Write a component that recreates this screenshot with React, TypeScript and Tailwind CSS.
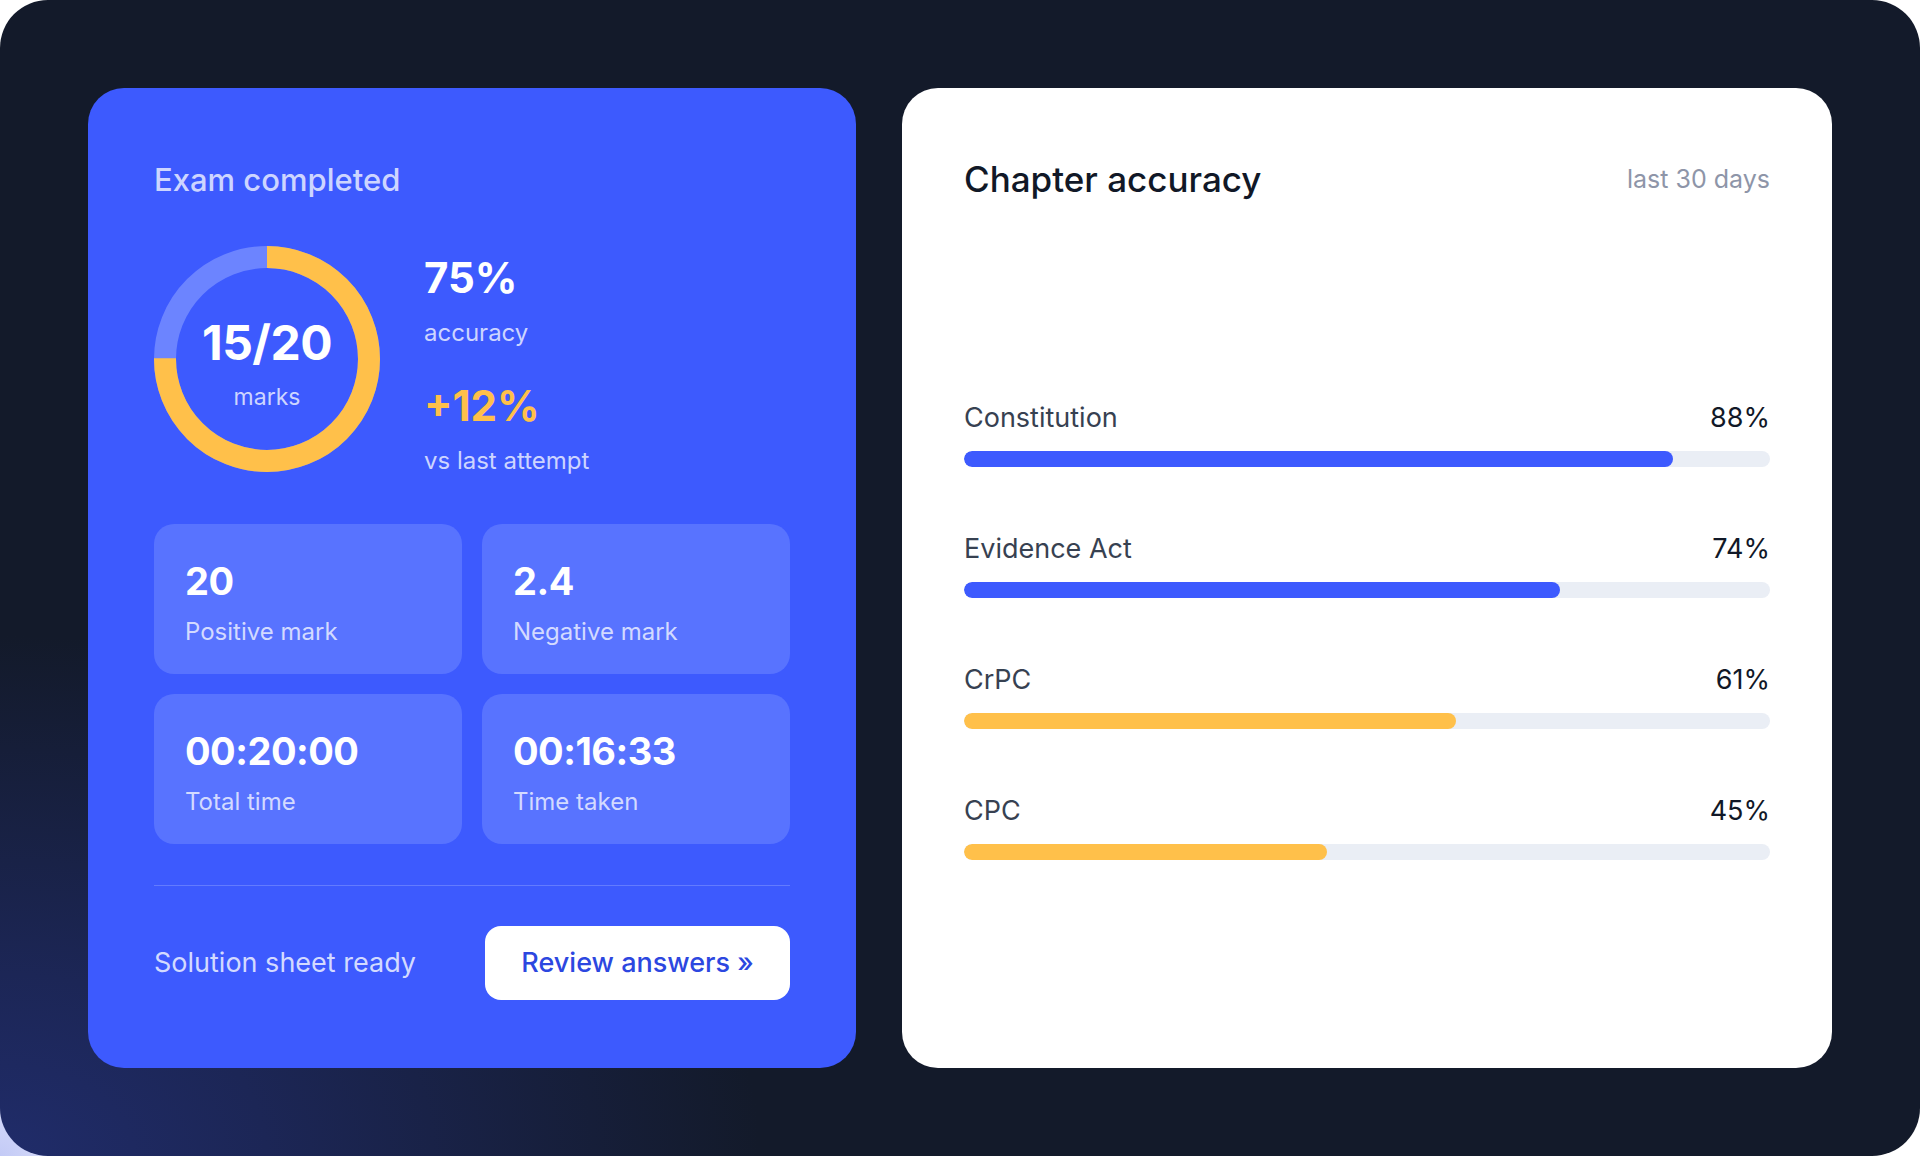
import React from "react";

function Donut() {
  const size = 226;
  const stroke = 22;
  const r = (size - stroke) / 2;
  const c = 2 * Math.PI * r;
  return (
    <div className="relative h-[226px] w-[226px] shrink-0">
      <svg width={size} height={size} viewBox={`0 0 ${size} ${size}`} className="block">
        <circle cx={size / 2} cy={size / 2} r={r} fill="none" stroke="#6c84ff" strokeWidth={stroke} />
        <circle
          cx={size / 2}
          cy={size / 2}
          r={r}
          fill="none"
          stroke="#ffc04a"
          strokeWidth={stroke}
          strokeDasharray={`${c * 0.75} ${c}`}
          transform={`rotate(-90 ${size / 2} ${size / 2})`}
        />
      </svg>
      <div className="absolute inset-0 flex flex-col items-center justify-center pt-[10px]">
        <span className="text-[48px] leading-[52px] font-bold tracking-[-0.5px] text-white">15/20</span>
        <span className="mt-[14px] text-[23px] leading-[28px] text-[#cdd5ff]">marks</span>
      </div>
    </div>
  );
}

function StatBox({ value, label }: { value: string; label: string }) {
  return (
    <div className="h-[150px] rounded-[20px] bg-[#5873ff] pl-[31px] pt-[33px]">
      <div className="text-[38px] leading-[48px] font-bold tracking-[-0.5px] text-white">{value}</div>
      <div className="mt-[11px] text-[24px] leading-[32px] text-[#d3daff]">{label}</div>
    </div>
  );
}

const rows = [
  { name: "Constitution", pct: 88, color: "bg-[#3d5afe]" },
  { name: "Evidence Act", pct: 74, color: "bg-[#3d5afe]" },
  { name: "CrPC", pct: 61, color: "bg-[#ffc04a]" },
  { name: "CPC", pct: 45, color: "bg-[#ffc04a]" },
];

export default function App() {
  return (
    <div className="min-h-[1156px] w-full bg-white bg-[radial-gradient(circle_160px_at_0%_100%,#c3caf6,#ffffff)] font-[Inter,sans-serif]">
      <div className="h-[1156px] w-full overflow-hidden rounded-[48px] bg-[#131a2a] bg-[radial-gradient(ellipse_760px_520px_at_0%_100%,#202c6a,#1c2656_35%,#131a2a)] p-[88px]">
        <div className="flex h-full gap-[46px]">
          {/* Left card */}
          <div className="flex w-[768px] shrink-0 flex-col rounded-[36px] bg-[#3d5afe] px-[66px] pt-[72px] pb-[68px]">
            <h2 className="text-[31px] leading-[40px] font-medium text-[#cdd5ff]">Exam completed</h2>
            <div className="mt-[46px] flex h-[226px] items-center gap-[44px]">
              <Donut />
              <div className="flex flex-col pt-[12px]">
                <span className="text-[42px] leading-[48px] font-bold text-white">75%</span>
                <span className="mt-[15px] text-[24px] leading-[32px] text-[#cdd5ff]">accuracy</span>
                <span className="mt-[33px] text-[42px] leading-[48px] font-bold text-[#ffc04a]">+12%</span>
                <span className="mt-[15px] text-[24px] leading-[32px] text-[#cdd5ff]">vs last attempt</span>
              </div>
            </div>
            <div className="mt-[52px] grid grid-cols-2 gap-[20px]">
              <StatBox value="20" label="Positive mark" />
              <StatBox value="2.4" label="Negative mark" />
              <StatBox value="00:20:00" label="Total time" />
              <StatBox value="00:16:33" label="Time taken" />
            </div>
            <div className="mt-[41px] h-px bg-white/20" />
            <div className="mt-[40px] flex items-center justify-between">
              <span className="text-[27px] leading-[36px] text-[#d3daff]">Solution sheet ready</span>
              <button className="h-[74px] w-[305px] rounded-[16px] bg-white text-[27px] font-medium text-[#2c47e0]">
                Review answers »
              </button>
            </div>
          </div>

          {/* Right card */}
          <div className="flex flex-1 flex-col rounded-[36px] bg-white px-[62px] pt-[69px]">
            <div className="flex items-center justify-between">
              <h2 className="text-[35px] leading-[44px] font-medium text-[#111827]">Chapter accuracy</h2>
              <span className="text-[25px] leading-[32px] text-[#8e95a8]">last 30 days</span>
            </div>
            <div className="mt-[199px] flex flex-col gap-[64px]">
              {rows.map((r) => (
                <div key={r.name}>
                  <div className="flex items-center justify-between text-[27px] leading-[36px]">
                    <span className="text-[#374151]">{r.name}</span>
                    <span className="text-[#111827]">{r.pct}%</span>
                  </div>
                  <div className="mt-[15px] h-[16px] w-full overflow-hidden rounded-full bg-[#eaeef5]">
                    <div className={`h-full rounded-full ${r.color}`} style={{ width: `${r.pct}%` }} />
                  </div>
                </div>
              ))}
            </div>
          </div>
        </div>
      </div>
    </div>
  );
}
